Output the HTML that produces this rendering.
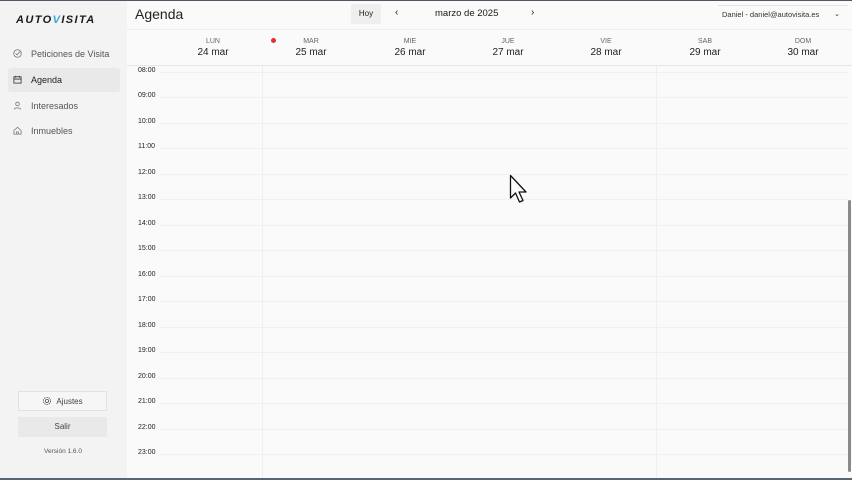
<!DOCTYPE html>
<html><head><meta charset="utf-8"><style>
*{margin:0;padding:0;box-sizing:border-box}
body{width:852px;height:480px;overflow:hidden;font-family:"Liberation Sans",sans-serif;background:#fafafa;position:relative;color:#1a1a1a}
.side{position:absolute;left:0;top:0;width:127px;height:480px;background:#f3f3f3}
.logo{position:absolute;left:16px;top:14px;font-weight:bold;font-style:italic;font-size:11px;letter-spacing:1.4px;color:#1b1b1b}
.nav{position:absolute;left:8px;width:112px;height:24px;font-size:9px;color:#555;padding-left:23px;line-height:24px}
.nav.act{background:#e9e9e9;color:#222;border-radius:3px}
.nav svg{position:absolute;left:5px;top:7px}
.btn{position:absolute;left:18px;width:89px;height:20px;font-size:8px;color:#444;text-align:center;line-height:20px}
.top{position:absolute;left:0;top:0;width:852px;height:1px;background:#556}
.bot{position:absolute;left:0;top:478px;width:852px;height:2px;background:#567}
.t{position:absolute;white-space:nowrap}
.day{position:absolute;top:38px;width:98px;text-align:center}
.day .a{font-size:7px;color:#666}
.day .b{font-size:10px;color:#222;margin-top:2px}
.hr{position:absolute;left:160px;width:688px;height:1px;background:#f0f0f0}
.hl{position:absolute;left:138px;font-size:7px;color:#222}
.vl{position:absolute;top:66px;width:1px;height:412px;background:#efefef}
</style></head><body>
<div class="side">
<div class="logo">AUTO<span style="color:#3aa7d6">V</span>ISITA</div>
<div class="nav" style="top:42px"><svg width="9" height="9" viewBox="0 0 10 10"><circle cx="5" cy="5" r="4.2" fill="none" stroke="#777" stroke-width="0.9"/><path d="M3 5l1.5 1.5L7.5 3" fill="none" stroke="#777" stroke-width="0.9"/></svg>Peticiones de Visita</div>
<div class="nav act" style="top:68px"><svg width="9" height="9" viewBox="0 0 10 10"><rect x="1" y="2" width="8" height="7" fill="none" stroke="#333" stroke-width="0.9"/><path d="M1 4.5h8M3 1v2M7 1v2" stroke="#333" stroke-width="0.9"/></svg>Agenda</div>
<div class="nav" style="top:94px"><svg width="9" height="9" viewBox="0 0 10 10"><circle cx="5" cy="3.3" r="2" fill="none" stroke="#777" stroke-width="0.9"/><path d="M1.5 9.5c0-2.5 7-2.5 7 0" fill="none" stroke="#777" stroke-width="0.9"/></svg>Interesados</div>
<div class="nav" style="top:119px"><svg width="9" height="9" viewBox="0 0 10 10"><path d="M1 5L5 1.5 9 5V9H1z M4 9V6.5h2V9" fill="none" stroke="#777" stroke-width="0.9"/></svg>Inmuebles</div>
<div class="btn" style="top:391px;border:1px solid #e2e2e2;background:#f6f6f6"><svg width="10" height="10" viewBox="0 0 10 10" style="vertical-align:-2px;margin-right:4px"><circle cx="5" cy="5" r="1.6" fill="none" stroke="#555" stroke-width="0.8"/><circle cx="5" cy="5" r="3.6" fill="none" stroke="#555" stroke-width="0.8" stroke-dasharray="1.5 0.8"/></svg>Ajustes</div>
<div class="btn" style="top:417px;background:#e9e9e9">Salir</div>
<div class="t" style="left:44px;top:448px;font-size:6.5px;color:#555">Versión 1.6.0</div>
</div>
<div class="t" style="left:135px;top:6px;font-size:14px;color:#222">Agenda</div>
<div class="t" style="left:351px;top:4px;width:30px;height:20px;background:#efefef;font-size:8px;line-height:20px;text-align:center">Hoy</div>
<div class="t" style="left:395px;top:7px;font-size:10px">‹</div>
<div class="t" style="left:435px;top:8px;font-size:9.5px">marzo de 2025</div>
<div class="t" style="left:531px;top:7px;font-size:10px">›</div>
<div class="t" style="left:718px;top:5px;width:130px;height:18px;border-top:1px solid #e4e4e4;font-size:7.5px;line-height:18px;padding-left:4px;color:#333">Daniel - daniel@autovisita.es<span style="position:absolute;right:8px;font-size:7px">⌄</span></div>
<div style="position:absolute;left:127px;top:29px;width:725px;height:1px;background:#efefef"></div>
<div style="position:absolute;left:271px;top:38px;width:5px;height:5px;border-radius:50%;background:#d33"></div>
<div class="day" style="left:164px"><div class="a">LUN</div><div class="b">24 mar</div></div>
<div class="day" style="left:262px"><div class="a">MAR</div><div class="b">25 mar</div></div>
<div class="day" style="left:361px"><div class="a">MIE</div><div class="b">26 mar</div></div>
<div class="day" style="left:459px"><div class="a">JUE</div><div class="b">27 mar</div></div>
<div class="day" style="left:557px"><div class="a">VIE</div><div class="b">28 mar</div></div>
<div class="day" style="left:656px"><div class="a">SAB</div><div class="b">29 mar</div></div>
<div class="day" style="left:754px"><div class="a">DOM</div><div class="b">30 mar</div></div>
<div style="position:absolute;left:127px;top:65px;width:725px;height:1px;background:#e6e6e6"></div>
<div class="vl" style="left:262px"></div><div class="vl" style="left:656px"></div>
<div class="hr" style="top:72px"></div><div class="hl" style="top:67px">08:00</div>
<div class="hr" style="top:97px"></div><div class="hl" style="top:92px">09:00</div>
<div class="hr" style="top:123px"></div><div class="hl" style="top:118px">10:00</div>
<div class="hr" style="top:148px"></div><div class="hl" style="top:143px">11:00</div>
<div class="hr" style="top:174px"></div><div class="hl" style="top:169px">12:00</div>
<div class="hr" style="top:199px"></div><div class="hl" style="top:194px">13:00</div>
<div class="hr" style="top:225px"></div><div class="hl" style="top:220px">14:00</div>
<div class="hr" style="top:250px"></div><div class="hl" style="top:245px">15:00</div>
<div class="hr" style="top:276px"></div><div class="hl" style="top:271px">16:00</div>
<div class="hr" style="top:301px"></div><div class="hl" style="top:296px">17:00</div>
<div class="hr" style="top:327px"></div><div class="hl" style="top:322px">18:00</div>
<div class="hr" style="top:352px"></div><div class="hl" style="top:347px">19:00</div>
<div class="hr" style="top:378px"></div><div class="hl" style="top:373px">20:00</div>
<div class="hr" style="top:403px"></div><div class="hl" style="top:398px">21:00</div>
<div class="hr" style="top:429px"></div><div class="hl" style="top:424px">22:00</div>
<div class="hr" style="top:454px"></div><div class="hl" style="top:449px">23:00</div>
<div style="position:absolute;left:848px;top:200px;width:3px;height:272px;background:#8a8a8a;border-radius:2px"></div>
<svg style="position:absolute;left:509px;top:174px" width="22" height="32" viewBox="0 0 22 32"><path d="M1.5 1.5V24l5-5 4 9 3.5-1.5-4-8.5h7z" fill="#fff" stroke="#111" stroke-width="1.3" stroke-linejoin="round"/></svg>
<div class="top"></div><div class="bot"></div>
</body></html>
